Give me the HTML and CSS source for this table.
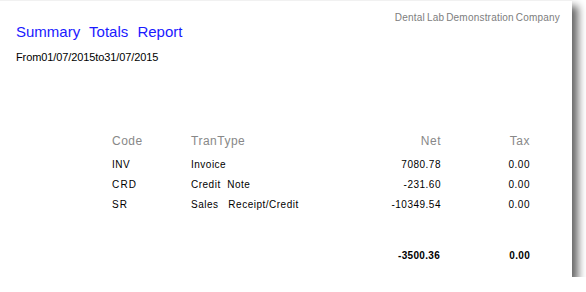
FILE: index.html
```html
<!DOCTYPE html>
<html>
<head>
<meta charset="utf-8">
<link rel="stylesheet" href="styles.css">
</head>
<body>
<div class="card">
  <div class="head">
    <div class="titles">
      <div class="title">Summary Totals Report</div>
      <div class="range">From01/07/2015to31/07/2015</div>
    </div>
    <div class="company">Dental Lab Demonstration Company</div>
  </div>
  <div class="table">
    <div class="th">Code</div>
    <div class="th">TranType</div>
    <div class="th num">Net</div>
    <div class="th num">Tax</div>

    <div class="td">INV</div>
    <div class="td">Invoice</div>
    <div class="td num">7080.78</div>
    <div class="td num">0.00</div>

    <div class="td wide">CRD</div>
    <div class="td">Credit&nbsp; Note</div>
    <div class="td num">-231.60</div>
    <div class="td num">0.00</div>

    <div class="td wide">SR</div>
    <div class="td">Sales&nbsp;&nbsp; Receipt/Credit</div>
    <div class="td num">-10349.54</div>
    <div class="td num">0.00</div>

    <div class="tt"></div>
    <div class="tt"></div>
    <div class="tt num net">-3500.36</div>
    <div class="tt num">0.00</div>
  </div>
</div>
</body>
</html>
```
FILE: styles.css
```css
html, body {
  margin: 0;
  padding: 0;
  background: #ffffff;
}
body {
  font-family: "Liberation Sans", Arial, sans-serif;
  color: #000;
}
.card {
  width: 572px;
  height: 276px;
  background: #fff;
  border-top: 1px solid #f1f1f1;
  box-shadow: 6px 6px 8px rgba(0, 0, 0, 0.6);
}
.head {
  display: flex;
  justify-content: space-between;
  padding: 0 12px 0 16px;
}
.title {
  margin-top: 22px;
  font-size: 15px;
  line-height: 18px;
  color: #1a1aff;
  word-spacing: 5px;
}
.range {
  margin-top: 10px;
  font-size: 11px;
  line-height: 13px;
  letter-spacing: -0.1px;
}
.company {
  margin-top: 11px;
  font-size: 10px;
  line-height: 12px;
  color: #7d7d7d;
  letter-spacing: 0.2px;
  word-spacing: -1px;
}
.table {
  display: grid;
  grid-template-columns: 79px 170px 80px 89px;
  margin: 70px 0 0 112px;
}
.th {
  font-size: 12px;
  line-height: 14px;
  color: #888888;
  letter-spacing: 0.5px;
  margin-bottom: 7px;
}
.td {
  font-size: 10px;
  line-height: 20px;
  letter-spacing: 0.5px;
  white-space: nowrap;
}
.wide {
  letter-spacing: 1.2px;
}
.tt {
  font-size: 10px;
  line-height: 20px;
  font-weight: bold;
  letter-spacing: 0.3px;
  margin-top: 31px;
}
.num {
  text-align: right;
}
.net {
  padding-right: 1px;
}
```
